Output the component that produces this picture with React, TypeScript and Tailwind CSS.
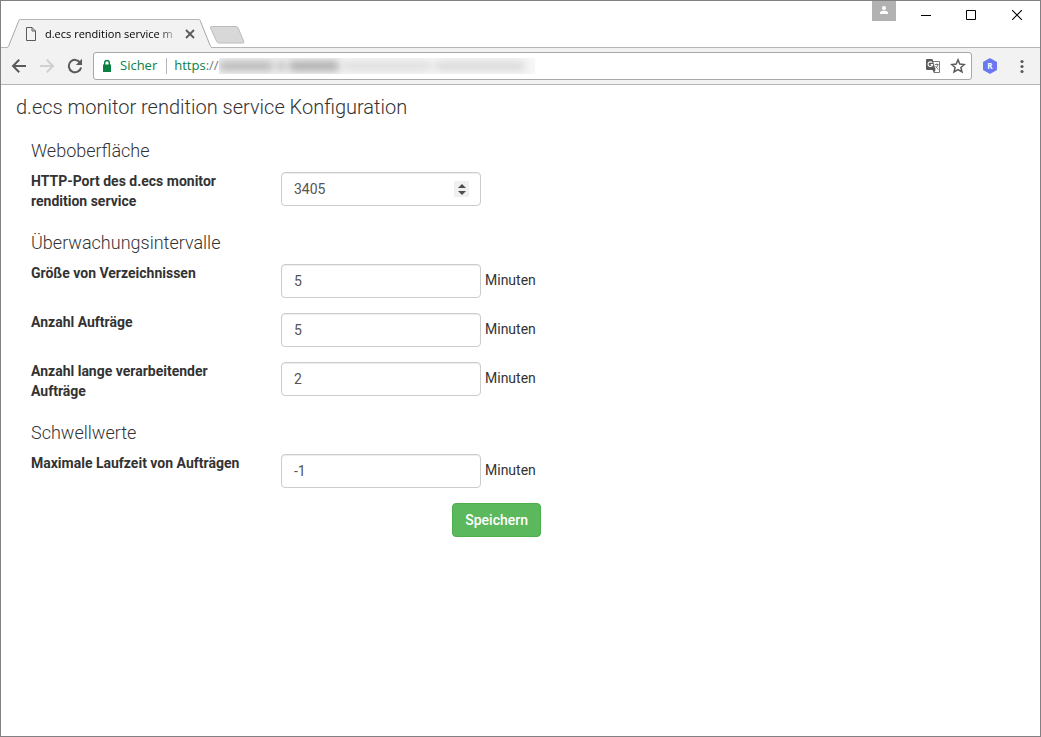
import { useState } from "react";

type Field = {
  name: string;
  label: string;
  unit?: string;
  spinner?: boolean;
};

type Section = {
  title: string;
  fields: Field[];
};

const sections: Section[] = [
  {
    title: "Weboberfläche",
    fields: [{ name: "port", label: "HTTP-Port des d.ecs monitor rendition service", spinner: true }],
  },
  {
    title: "Überwachungsintervalle",
    fields: [
      { name: "dirSize", label: "Größe von Verzeichnissen", unit: "Minuten" },
      { name: "jobCount", label: "Anzahl Aufträge", unit: "Minuten" },
      { name: "longJobs", label: "Anzahl lange verarbeitender Aufträge", unit: "Minuten" },
    ],
  },
  {
    title: "Schwellwerte",
    fields: [{ name: "maxRuntime", label: "Maximale Laufzeit von Aufträgen", unit: "Minuten" }],
  },
];

function TabStrip() {
  return (
    <div className="flex h-[47px] items-end justify-between border-b border-[#b6b4b6] pl-1.5">
      <div className="-mb-px flex min-w-0 items-end">
        <svg width="13" height="29" viewBox="0 0 13 29" className="shrink-0">
          <path d="M0 29V28.5C1 28.5 1.3 27.8 1.8 26.6L11.6 2.2C12 1 12.4 .5 13 .5V29Z" fill="#f2f2f2" />
          <path d="M0 28.5C1 28.5 1.3 27.8 1.8 26.6L11.6 2.2C12 1 12.4 .5 13 .5" fill="none" stroke="#a9a7a9" />
        </svg>
        <div className="flex h-[29px] w-[179px] items-center border-t border-[#b6b4b6] bg-[#f2f2f2] pr-1 pl-1.5">
          <svg width="10" height="14" viewBox="0 0 10 14" className="shrink-0" fill="none" stroke="#5a5a5a">
            <path d="M.5 .5H6L9.5 4V13.5H.5ZM6 .5V4H9.5" />
          </svg>
          <span className="ml-[9px] w-[134px] bg-gradient-to-r from-black from-85% to-transparent bg-clip-text text-[11px] whitespace-nowrap text-transparent">
            d.ecs rendition service m
          </span>
          <button type="button" aria-label="Tab schließen" className="ml-1.5 shrink-0">
            <svg width="10" height="10" viewBox="0 0 10 10" stroke="#5a5a5a" strokeWidth="1.8">
              <path d="M1 1L9 9M9 1L1 9" />
            </svg>
          </button>
        </div>
        <svg width="13" height="29" viewBox="0 0 13 29" className="shrink-0">
          <path d="M13 29V28.5C12 28.5 11.7 27.8 11.2 26.6L1.4 2.2C1 1 .6 .5 0 .5V29Z" fill="#f2f2f2" />
          <path d="M13 28.5C12 28.5 11.7 27.8 11.2 26.6L1.4 2.2C1 1 .6 .5 0 .5" fill="none" stroke="#a9a7a9" />
        </svg>
        <button type="button" aria-label="Neuer Tab" className="mb-1 -ml-[3px] shrink-0">
          <svg width="36" height="18" viewBox="0 0 36 18">
            <path
              d="M2.5 .5H27Q28.5 .5 29.2 2L34.8 15.5Q35.2 17 34 17H10Q8.4 17 7.8 15.6L1.5 2Q1 .5 2.5 .5Z"
              fill="#d8d8d8"
              stroke="#bcbcbc"
            />
          </svg>
        </button>
      </div>

      <div className="flex shrink-0 items-start self-start pr-[18px]">
        <button type="button" aria-label="Profil" className="flex h-5 w-6 justify-center bg-[#b2b2b2] pt-1">
          <svg width="10" height="10" viewBox="0 0 10 10" fill="#fff">
            <circle cx="5" cy="3" r="2" />
            <path d="M1 9V7.6C1 6.4 3.4 5.8 5 5.8S9 6.4 9 7.6V9Z" />
          </svg>
        </button>
        <button type="button" aria-label="Minimieren" className="flex h-7 w-[35px] items-center justify-end">
          <svg width="10" height="10" viewBox="0 0 10 10" stroke="#000">
            <path d="M0 5.5H10" />
          </svg>
        </button>
        <button type="button" aria-label="Maximieren" className="flex h-7 w-[45px] items-center justify-end">
          <svg width="10" height="10" viewBox="0 0 10 10" fill="none" stroke="#000">
            <path d="M.5 .5H9.5V9.5H.5Z" />
          </svg>
        </button>
        <button type="button" aria-label="Schließen" className="flex h-7 w-[46px] items-center justify-end">
          <svg width="10" height="10" viewBox="0 0 10 10" stroke="#000" strokeWidth="1.1">
            <path d="M0 0L10 10M10 0L0 10" />
          </svg>
        </button>
      </div>
    </div>
  );
}

function Toolbar() {
  return (
    <div className="flex h-[37px] items-center border-b border-[#b6b4b6] bg-[#f2f2f2] px-2.5">
      <button type="button" aria-label="Zurück">
        <svg width="16" height="16" viewBox="0 0 16 16" fill="none" stroke="#5a5a5a" strokeWidth="2">
          <path d="M15 8H2.5M8.2 1.7L2 8L8.2 14.3" />
        </svg>
      </button>
      <button type="button" aria-label="Vorwärts" className="ml-3" disabled>
        <svg width="16" height="16" viewBox="0 0 16 16" fill="none" stroke="#d0d0d0" strokeWidth="2">
          <path d="M1 8H13.5M7.8 1.7L14 8L7.8 14.3" />
        </svg>
      </button>
      <button type="button" aria-label="Neu laden" className="ml-3">
        <svg width="16" height="16" viewBox="0 0 16 16">
          <path d="M13.2 4.6A6.2 6.2 0 1 0 14.1 9.5" fill="none" stroke="#5a5a5a" strokeWidth="2" />
          <path d="M15 .8V7H8.8Z" fill="#5a5a5a" />
        </svg>
      </button>

      <div className="ml-[10px] flex h-7 min-w-0 flex-1 items-center rounded-[3px] border border-[#a9a7a9] bg-white px-[5px]">
        <svg width="16" height="16" viewBox="0 0 16 16" className="shrink-0" fill="#0b8043">
          <path d="M4 6.5H12V14H4Z" />
          <path d="M5.7 7V4.8A2.3 2.3 0 0 1 10.3 4.8V7" fill="none" stroke="#0b8043" strokeWidth="1.4" />
        </svg>
        <span className="ml-[5px] text-[13px] text-[#0b8043]">Sicher</span>
        <span className="ml-[9px] h-4 w-px shrink-0 bg-[#b5b5b5]" />
        <span className="ml-[7px] text-[13px] whitespace-nowrap text-[#0b8043]">
          https<span className="text-[#777]">://</span>
        </span>
        {/* host and path are blanked out */}
        <span aria-hidden="true" className="flex h-4 w-[316px] items-center gap-1 overflow-hidden bg-[#f7f7f7]">
          <span className="h-2.5 w-[54px] bg-[#b4b4b4] blur-[4px]" />
          <span className="h-2.5 w-2 bg-[#b4b4b4] blur-[4px]" />
          <span className="h-2.5 w-[50px] bg-[#a8a8a8] blur-[4px]" />
          <span className="h-2 w-[88px] bg-[#dadada] blur-[4px]" />
          <span className="h-2 w-[90px] bg-[#d4d4d4] blur-[4px]" />
        </span>
        <button type="button" aria-label="Seite übersetzen" className="ml-auto shrink-0">
          <svg width="16" height="16" viewBox="0 0 16 16">
            <path d="M7 3.5H14.5V14.5H9" fill="#fff" stroke="#777" />
            <path d="M2 1H7.5L10.5 12H2Q1 12 1 11V2Q1 1 2 1Z" fill="#5a5a5a" />
            <path d="M7.5 12L9 15L10.5 12Z" fill="#5a5a5a" />
            <path d="M7.2 4.8A2.3 2.3 0 1 0 7.6 6.6H5.6" fill="none" stroke="#fff" strokeWidth="1.1" />
            <path d="M9.8 6.5H13.6M11.7 5.5V6.5M13 6.5Q12.4 9 10.4 10.5M10.6 8Q11.5 10 13.4 11.5" fill="none" stroke="#777" />
          </svg>
        </button>
        <button type="button" aria-label="Lesezeichen" className="ml-[9px] shrink-0">
          <svg width="16" height="16" viewBox="0 0 16 16" fill="none" stroke="#5a5a5a" strokeWidth="1.5">
            <path d="M8 1.8L9.8 6.1L14.4 6.5L10.9 9.5L12 14L8 11.6L4 14L5.1 9.5L1.6 6.5L6.2 6.1Z" />
          </svg>
        </button>
      </div>

      <button type="button" aria-label="Erweiterung" className="ml-[10px]">
        <svg width="16" height="16" viewBox="0 0 16 16">
          <path d="M8 1L14.2 4.5V11.5L8 15L1.8 11.5V4.5Z" fill="#6b78f0" stroke="#6b78f0" strokeWidth="1.6" strokeLinejoin="round" />
          <text x="8" y="11" textAnchor="middle" fontSize="8" fontWeight="700" fill="#fff">
            R
          </text>
        </svg>
      </button>
      <button type="button" aria-label="Menü" className="ml-4">
        <svg width="16" height="16" viewBox="0 0 16 16" fill="#5a5a5a">
          <circle cx="8" cy="3.5" r="1.6" />
          <circle cx="8" cy="8.5" r="1.6" />
          <circle cx="8" cy="13.5" r="1.6" />
        </svg>
      </button>
    </div>
  );
}

export default function App() {
  const [values, setValues] = useState<Record<string, string>>({
    port: "3405",
    dirSize: "5",
    jobCount: "5",
    longJobs: "2",
    maxRuntime: "-1",
  });

  const handleChange = (e: React.ChangeEvent<HTMLInputElement>) => {
    setValues({ ...values, [e.target.name]: e.target.value });
  };

  const step = (name: string, delta: number) => {
    setValues({ ...values, [name]: String(Number(values[name]) + delta) });
  };

  return (
    <div className="flex min-h-screen flex-col border border-[#838083] bg-white font-['Open_Sans',sans-serif]">
      <TabStrip />
      <Toolbar />
      <main className="px-[15px] pt-2.5 font-[Roboto,sans-serif] text-sm leading-5 text-[#333]">
        <h1 className="text-xl leading-6 font-light">d.ecs monitor rendition service Konfiguration</h1>
        <form onSubmit={(e) => e.preventDefault()} className="mt-[22px] max-w-[525px] pl-[15px]">
          {sections.map((section) => (
            <section key={section.title} className="mb-[22px] last-of-type:mb-[15px]">
              <h2 className="mb-[11px] text-lg leading-5 font-light">{section.title}</h2>
              <div className="flex flex-col gap-[15px]">
                {section.fields.map((field) => (
                  <div key={field.name} className="flex items-start">
                    <label htmlFor={field.name} className="-mt-px w-[220px] font-bold">
                      {field.label}
                    </label>
                    <div className="ml-[30px] flex items-start gap-1">
                      <div className="relative">
                        <input
                          id={field.name}
                          name={field.name}
                          type="number"
                          value={values[field.name]}
                          onChange={handleChange}
                          className="h-[34px] w-[200px] rounded border border-[#ccc] px-3 text-[#555] shadow-[inset_0_1px_1px_rgba(0,0,0,0.075)] [&::-webkit-inner-spin-button]:appearance-none"
                        />
                        {field.spinner && (
                          <div className="absolute top-[9px] right-3 flex h-4 w-[15px] flex-col bg-[#f0f0f0]">
                            <button
                              type="button"
                              aria-label="Erhöhen"
                              onClick={() => step(field.name, 1)}
                              className="flex h-2 items-end justify-center pb-px"
                            >
                              <svg width="8" height="4" viewBox="0 0 8 4" fill="#4d4d4d">
                                <path d="M0 4L4 0L8 4Z" />
                              </svg>
                            </button>
                            <button
                              type="button"
                              aria-label="Verringern"
                              onClick={() => step(field.name, -1)}
                              className="flex h-2 items-start justify-center pt-0.5"
                            >
                              <svg width="8" height="4" viewBox="0 0 8 4" fill="#4d4d4d">
                                <path d="M0 0L4 4L8 0Z" />
                              </svg>
                            </button>
                          </div>
                        )}
                      </div>
                      {field.unit && <span className="pt-1.5">{field.unit}</span>}
                    </div>
                  </div>
                ))}
              </div>
            </section>
          ))}
          <div className="flex justify-end">
            <button
              type="submit"
              className="h-[34px] rounded border border-[#4cae4c] bg-[#5cb85c] px-3 font-medium text-white"
            >
              Speichern
            </button>
          </div>
        </form>
      </main>
    </div>
  );
}
